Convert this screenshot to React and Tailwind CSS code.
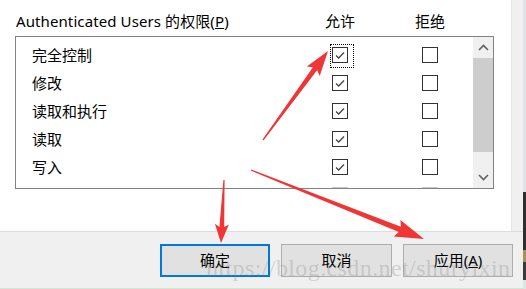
const ROWS = ["完全控制", "修改", "读取和执行", "读取", "写入", ""]

const CJK = { fontFamily: '"Noto Sans", "Noto Sans CJK SC", sans-serif' }

function arrowPoints(tail, tip, headLen, headHalf, shaftHalf) {
  const [x1, y1] = tail
  const [x2, y2] = tip
  const dx = x2 - x1
  const dy = y2 - y1
  const len = Math.hypot(dx, dy)
  const ux = dx / len
  const uy = dy / len
  const px = -uy
  const py = ux
  const bx = x2 - ux * headLen
  const by = y2 - uy * headLen
  const wx = x2 - ux * (headLen + 3)
  const wy = y2 - uy * (headLen + 3)
  const pts = [
    [x1 + px * 0.6, y1 + py * 0.6],
    [bx + px * shaftHalf, by + py * shaftHalf],
    [wx + px * headHalf, wy + py * headHalf],
    [x2, y2],
    [wx - px * headHalf, wy - py * headHalf],
    [bx - px * shaftHalf, by - py * shaftHalf],
    [x1 - px * 0.6, y1 - py * 0.6],
  ]
  return pts.map((p) => p.map((n) => n.toFixed(1)).join(",")).join(" ")
}

function Checkbox({ checked, focused, faded }) {
  return (
    <div className={`relative h-4 w-4 border ${faded ? "border-[#c8c8c8]" : "border-[#333]"} bg-white`}>
      {checked && (
        <svg width="14" height="14" viewBox="0 0 14 14" className="absolute left-0 top-0">
          <polyline points="3,7.5 5.7,10 11,4.5" fill="none" stroke="#444" strokeWidth="1.3" />
        </svg>
      )}
      {focused && <div className="absolute -left-[3px] -top-[4px] h-[24px] w-[24px] border border-dotted border-black" />}
    </div>
  )
}

function Chevron({ up }) {
  return (
    <svg width="11" height="7" viewBox="0 0 11 7">
      <polyline
        points={up ? "1,6 5.5,1.5 10,6" : "1,1 5.5,5.5 10,1"}
        fill="none"
        stroke="#606060"
        strokeWidth="1.6"
      />
    </svg>
  )
}

export default function App() {
  return (
    <div className="relative flex h-[289px] w-[526px] overflow-hidden bg-[#f0f0f0] text-black" style={CJK}>
      <div className="flex w-[523px] flex-col">
        <div className="flex h-[231px]">
          <div className="w-[511px] bg-white">
            <div className="flex h-[36px] pt-[11px] text-[15px] leading-[20px]">
              <div className="w-[310px] pl-[16px] tracking-[0.1px]">
                Authenticated Users 的权限(<span className="underline">P</span>)
              </div>
              <div className="w-[60px] text-center">允许</div>
              <div className="w-[30px]" />
              <div className="w-[60px] text-center">拒绝</div>
            </div>
            <div className="ml-[15px] flex h-[153px] w-[479px] border border-[#828282]">
              <div className="flex-1 overflow-hidden pt-[4px]">
                {ROWS.map((label, i) => (
                  <div key={i} className="flex h-[28px] items-center text-[15px]">
                    <div className="w-[316px] pl-[16px]">{label}</div>
                    <Checkbox checked focused={i === 0} faded={i === 5} />
                    <div className="w-[74px]" />
                    <Checkbox faded={i === 5} />
                  </div>
                ))}
              </div>
              <div className="flex w-[20px] flex-col bg-[#f0f0f0]">
                <div className="flex h-[21px] items-center justify-center">
                  <Chevron up />
                </div>
                <div className="h-[94px] bg-[#cdcdcd]" />
                <div className="flex-1" />
                <div className="flex h-[21px] items-center justify-center">
                  <Chevron />
                </div>
              </div>
            </div>
          </div>
          <div className="flex-1 border-l border-[#e6e6e6] bg-[#f0f0f0]" />
        </div>
        <div className="h-px bg-[#dcdcdc]" />
        <div className="flex flex-1 justify-end gap-[11px] pr-[10px] pt-[12px] text-[15px]">
          <button className="flex h-[33px] w-[110px] items-center justify-center border-2 border-[#0078d7] bg-[#e1e1e1]">
            确定
          </button>
          <button className="flex h-[33px] w-[111px] items-center justify-center border border-[#adadad] bg-[#e1e1e1]">
            取消
          </button>
          <button className="flex h-[33px] w-[110px] items-center justify-center border border-[#adadad] bg-[#e1e1e1]">
            应用(<span className="underline">A</span>)
          </button>
        </div>
        <div className="h-px bg-[#cfe8cf]" />
      </div>
      <div className="flex w-[3px] flex-col">
        <div className="h-[192px] bg-[#dfe4e4]" />
        <div className="h-[58px] bg-[#2f2f2f]" />
        <div className="h-[12px] bg-[#a8925a]" />
        <div className="h-[18px] bg-[#3a3a3a]" />
        <div className="flex-1 bg-[#dfe4e4]" />
      </div>

      <div
        className="pointer-events-none absolute left-[206px] top-[250px] whitespace-nowrap text-[24px] tracking-[0.4px] text-[rgba(130,130,130,0.3)]"
        style={{ fontFamily: '"Liberation Serif", serif' }}
      >
        https://blog.csdn.net/shuryixin
      </div>

      <svg className="pointer-events-none absolute left-0 top-0" width="526" height="289">
        <polygon points={arrowPoints([263, 140], [328, 51], 22, 8, 2.6)} fill="#ef3535" />
        <polygon points={arrowPoints([224, 180], [221, 243], 16, 7, 2.4)} fill="#ef3535" />
        <polygon points={arrowPoints([251, 170], [424, 239], 26, 9, 2.8)} fill="#ef3535" />
      </svg>
    </div>
  )
}
